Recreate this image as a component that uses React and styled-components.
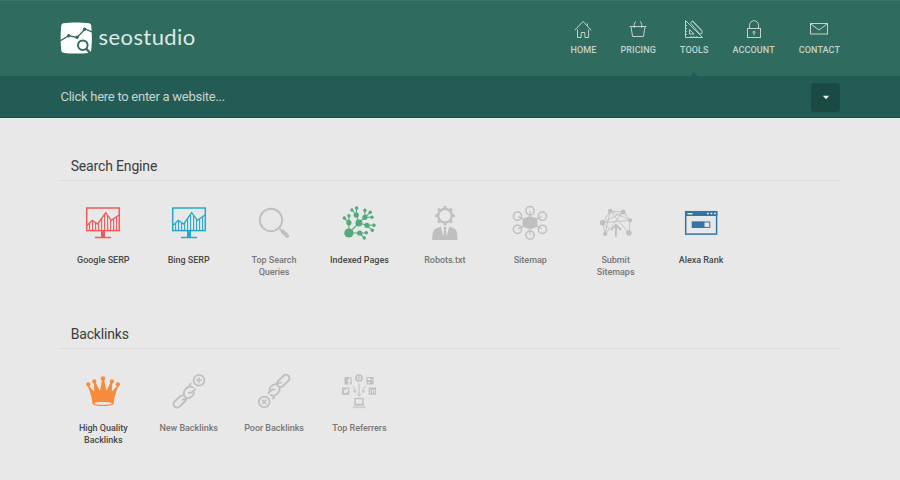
import React from 'react';
import styled, { createGlobalStyle } from 'styled-components';

const Global = createGlobalStyle`
  * { box-sizing: border-box; }
  body { margin: 0; background: #e8e8e8; font-family: Roboto, "Liberation Sans", sans-serif; }
`;

const Page = styled.div`
  height: 480px;
  overflow: hidden;
  background: #e8e8e8;
`;

const Header = styled.header`
  height: 76px;
  padding: 0 60px;
  display: flex;
  justify-content: space-between;
  background: #2f6c5f;
  border-top: 1px solid #38766a;
`;

const Brand = styled.a`
  display: flex;
  align-items: flex-start;
  gap: 5.5px;
  padding-top: 21px;
  color: #fff;
`;

const BrandName = styled.span`
  margin-top: -1px;
  font: 400 22px/32px Lato, sans-serif;
  letter-spacing: 0.42px;
  color: #dfe9e6;
`;

const Nav = styled.nav`
  display: flex;
  gap: 24px;
`;

const NavItem = styled.a`
  position: relative;
  display: flex;
  flex-direction: column;
  align-items: center;
  padding-top: 18px;
  color: #c4d2ce;
  font-size: 9px;
  font-weight: 500;
  line-height: 12px;
  letter-spacing: 0.1px;

  svg { margin-bottom: 3px; }

  &::after {
    content: '';
    display: ${(p) => (p.$active ? 'block' : 'none')};
    position: absolute;
    bottom: 0;
    border: solid transparent;
    border-width: 0 4px 4px;
    border-bottom-color: #235c54;
  }
`;

const SearchBar = styled.div`
  height: 42px;
  padding: 1px 60px 0;
  display: flex;
  align-items: center;
  justify-content: space-between;
  background: #235c54;
  border-bottom: 1px solid #1d4e48;
`;

const Prompt = styled.span`
  padding-left: 0.5px;
  font-size: 13px;
  line-height: 16px;
  letter-spacing: -0.27px;
  color: #c8d5d2;
`;

const Toggle = styled.button`
  width: 29px;
  height: 29px;
  padding: 0;
  border: 0;
  border-radius: 3px;
  background: #1b4a45;
  display: grid;
  place-items: center;
`;

const Section = styled.section`
  height: 168px;
  margin: 0 60px;
`;

const Content = styled.main`
  padding-top: 37px;
`;

const Title = styled.h2`
  height: 26px;
  margin: 0 0 22px;
  padding: 0 10.7px;
  border-bottom: 1px solid #d9d9d9;
  color: #3c3c3c;
  font-size: 14px;
  font-weight: 400;
  line-height: 22px;
  letter-spacing: -0.16px;
`;

const Tools = styled.div`
  display: flex;
  padding-left: 0.6px;
`;

const Tool = styled.a`
  width: 85.4px;
  padding: 0 10px;
  display: flex;
  flex-direction: column;
  align-items: center;
  text-align: center;
  color: ${(p) => (p.$on ? '#484848' : '#777')};
  font-size: 9px;
  font-weight: 500;
  line-height: 12.4px;
  letter-spacing: -0.03px;

  svg { color: ${(p) => p.$tint || '#bfbfbf'}; margin-bottom: 10.7px; flex: none; }
`;

const Icon = ({ children }) => (
  <svg width="40" height="40" viewBox="0 0 40 40" fill="none" stroke="currentColor" strokeWidth="1.5">
    {children}
  </svg>
);

const dots = (list) =>
  list.map(([x, y, r]) => <circle key={`${x}-${y}`} cx={x} cy={y} r={r} fill="currentColor" stroke="none" />);

const Monitor = () => (
  <Icon>
    <rect x="3.7" y="5" width="32.6" height="22.6" strokeWidth="1.5" />
    <path d="M4 22.5 9.3 17.3 14.7 21 22.7 9.7 28.3 17.3 36 12" strokeWidth="1.3" />
    <path d="M6.6 20.5V27M9.6 18V27M12.6 20V27M15.6 20V27M18.6 16V27M21.6 11.5V27M24.6 13V27M27.6 17V27M30.6 16V27M33.6 14V27" strokeWidth="1.1" />
    <path d="M18 28h4v6h-4z" fill="currentColor" stroke="none" />
    <path d="M12.5 34.5h15" strokeLinecap="round" />
  </Icon>
);

const Magnifier = () => (
  <Icon>
    <circle cx="17" cy="17" r="11.2" strokeWidth="1.9" />
    <path d="m25.5 25.7 3 3" strokeWidth="2" />
    <path d="m29 28.7 4.2 4.1" strokeWidth="4" strokeLinecap="round" />
  </Icon>
);

const Network = () => (
  <Icon>
    <path
      strokeWidth="1.1"
      d="M9.9 30 19.9 20 17.3 12 12.9 7M17.3 12l.3-7M19.9 20l6-5.7V7.3M25.9 14.3l5.4-5M25.9 14.3h7M19.9 20l8 2.3h7M27.9 22.3l5.4 5M9.9 30h17.4M20.6 30l4.7 5M9.9 30V12.7M9.9 19.7 5.3 15"
    />
    {dots([
      [9.9, 30, 4.6], [19.9, 20, 3.4], [17.3, 12, 2.6], [25.9, 14.3, 2.6], [27.9, 22.3, 2.6], [20.6, 30, 2.6],
      [9.9, 19.7, 2.6], [12.9, 7, 1.7], [17.6, 5, 1.8], [25.9, 7.3, 1.7], [31.3, 9.3, 1.7], [32.9, 14.3, 1.7],
      [34.9, 22.3, 1.8], [33.3, 27.3, 1.7], [27.3, 29.7, 1.8], [25.3, 35, 1.7], [5.3, 15, 1.7], [9.9, 12.7, 1.7],
    ])}
  </Icon>
);

const Robot = () => (
  <Icon>
    <circle cx="20" cy="12.7" r="6.8" strokeWidth="2.2" />
    {[0, 45, 90, 135, 180, 225, 270, 315].map((a) => (
      <path key={a} d="M20 5.8V2.9" strokeWidth="2.8" transform={`rotate(${a} 20 12.7)`} />
    ))}
    <path
      fill="currentColor"
      stroke="none"
      d="M7.3 37c0-7 .9-10.3 3.7-11.4l4.7-2 2.7 10 .8-7-.8-1.5.9-1.3h1.4l.9 1.3-.8 1.5.8 7 2.7-10 4.7 2c2.8 1.1 3.5 4.4 3.5 11.4z"
    />
  </Icon>
);

const Sitemap = () => (
  <Icon>
    {[[20, 7.7], [7.5, 13.2], [32.4, 13.2], [7.5, 26.3], [32.4, 26.3], [20, 32.1]].map(([x, y]) => (
      <circle key={`${x}-${y}`} cx={x} cy={y} r="4.1" strokeWidth="1.5" />
    ))}
    <path d="M20 8v24M8 13.5 32 26M32 13.5 8 26" strokeWidth="1.1" />
    <path d="m20 13.2 7.4 2.4v8.2L20 26.3l-7.4-2.5v-8.2z" fill="currentColor" stroke="none" />
  </Icon>
);

const Submit = () => (
  <Icon>
    <path
      strokeWidth=".9"
      d="M14.2 8 27.2 9l7 8.3L32.9 30 14.2 8 6.5 19.7l2.7 11 5-22.7 20 9.3M6.5 19.7l27.7-2.4M27.2 9 6.5 19.7 16 28M27.2 9 9.2 30.7"
    />
    <path d="M19.9 34.5V22M14.8 27l5.1-5.1 5.1 5.1" stroke="#e8e8e8" strokeWidth="4" />
    <path d="M19.9 33.7V22M14.8 27l5.1-5.1 5.1 5.1" strokeWidth="1.9" />
    {dots([[14.2, 8, 2.2], [27.2, 9, 2.5], [6.5, 19.7, 2.7], [34.2, 17.3, 2.1], [9.2, 30.7, 2.2], [32.9, 30, 2.8]])}
  </Icon>
);

const Browser = () => (
  <Icon>
    <rect x="4.7" y="8.7" width="30.9" height="22.4" />
    <path d="M4 8h32.3v5H4z" fill="currentColor" stroke="none" />
    <path d="M6.5 10.8h5M26 10.5h1.8M29.5 10.5h1.8M33 10.5h1.8" stroke="#e8e8e8" strokeWidth="1.4" />
    <rect x="11.2" y="19" width="17.6" height="5.4" strokeWidth="1" />
    <path d="M11 18.7h12.5v6H11z" fill="currentColor" stroke="none" />
  </Icon>
);

const Crown = () => (
  <Icon>
    {dots([[5.3, 13.3, 2.1], [11.3, 10.4, 2.1], [20, 7.6, 2.3], [28.9, 10.4, 2.1], [34.9, 13.3, 2.1]])}
    <path
      fill="currentColor"
      stroke="none"
      d="m5 14 6.3 6.8L10.7 11h1.6l4.7 8.8L19.2 8h1.7l2.5 11.8L27.7 11h1.7l-.6 9.8 6.3-6.8.6.7c-2 4-4.4 11-5 18-1.5 3.2-19.4 3.2-21.2 0-.6-7-3-14-5.1-18z"
    />
    <ellipse cx="20.1" cy="32.4" rx="8.7" ry="1.5" fill="#e8e8e8" stroke="none" />
  </Icon>
);

const ChainAdd = () => (
  <Icon>
    <circle cx="30" cy="9.3" r="5.4" strokeWidth="1.7" />
    <path d="M27 9.3h6M30 6.3v6" />
    <rect x="3.5" y="27" width="14.5" height="7" rx="3.5" transform="rotate(-43 10.8 30.5)" strokeWidth="1.9" />
    <path d="M12.8 28.5c2 .7 3.4-.3 4.8-1.6M15 24c-.7-2.5.2-4.5 2-6.3 2.5-2.5 5-2.8 7.3-.9M17.6 27c2 .5 4-.2 6-2.4 1-1.2 1.7-2.3 1.5-3.6M19 21.5c1.7.8 3.5.3 5.2-1.4l2.5-2.5M20 14.5l2.2-2.4" strokeWidth="1.8" />
  </Icon>
);

const ChainRemove = () => (
  <Icon>
    <circle cx="10.2" cy="31" r="5.4" strokeWidth="1.7" />
    <path d="m8 28.8 4.4 4.4M12.4 28.8 8 33.2" />
    <rect x="22" y="6.3" width="14.5" height="7" rx="3.5" transform="rotate(-43 29.3 9.8)" strokeWidth="1.9" />
    <path d="M27.5 11.8c-2-.7-3.4.3-4.8 1.6M25.5 16.3c.7 2.5-.2 4.5-2 6.3-2.5 2.5-5 2.8-7.3.9M22.9 13.3c-2-.5-4 .2-6 2.4-1 1.2-1.7 2.3-1.5 3.6M21.5 18.8c-1.7-.8-3.5-.3-5.2 1.4l-2.5 2.5M20.5 25.8l-2.2 2.4" strokeWidth="1.8" />
  </Icon>
);

const Referrers = () => (
  <Icon>
    <path
      fill="currentColor"
      stroke="none"
      fillRule="evenodd"
      d="M5.5 6h7.2v7.4h-1.8v-2.9h1.2V9.2h-1.2c0-1.2.2-1.5 1.3-1.5V6.6C10 6.5 9.4 7.4 9.4 9.2H8.3v1.3h1.1v2.9H5.5zM27.4 6h7.2v7.4h-7.2zm1.2 1v2.2h2.6V7zm.2 4v1.3h2.5V11zm3.3-2.7v1h1.5v-1zM3 16.4h7.3v7.3H3zm1.2 1.7c.2 1 .5 1.7 1 2.2l-.6.1 1.2 1.1-1.3.5c2.5 1 4.5-.5 4.6-3l.5-.9-1.2-.4c-1-.5-1.7.2-1.7 1.3-1 0-1.8-.4-2.5-1M29.7 16.4H37v7.3h-7.3zm1.2 2.3v3.6h1v-3.6zm0-1.3v.8h1v-.8zm2 1.3v3.6h.9v-2.4c.5-.6 1.2-.4 1.2.3v2.1h1v-2.4c0-1.4-1.5-1.7-2.2-.8v-.4z"
    />
    <circle cx="20" cy="7" r="3.1" strokeWidth="1.5" />
    <path d="m19.2 9 .8-3.2M18.6 6.5c.6-1.6 3-1 2.3.6-.3.6-.7.7-1 .5" strokeWidth=".8" />
    <path d="M20 12.5V25M17.8 22.8l2.2 2.4 2.2-2.4M13.5 15c2 1.5 2.3 3.5 2.3 6M14 19.5l1.8 2 1.5-2M26.5 15c-2 1.5-2.3 3.5-2.3 6M26 19.5l-1.8 2-1.5-2" strokeWidth="1" />
    <rect x="16" y="27.5" width="8" height="6" strokeWidth="1.4" />
    <path d="M14.8 34.8h10.4l.8 1.8H14z" strokeWidth=".8" />
  </Icon>
);

const NavIcon = ({ children }) => (
  <svg width="20" height="22" viewBox="0 0 20 22" fill="none" stroke="currentColor" strokeWidth="1">
    {children}
  </svg>
);

const navItems = [
  ['HOME', <><path d="M4.5 10.5v8h3.7v-5h3.7v5h3.7v-8" /><path d="m1.8 11.2 8.2-8.8 8.2 8.8M14.5 4.5v2" /></>],
  ['PRICING', <><path d="M1.5 7.5h17M3 8l1.6 9.5h10.8L17 8M6.2 9V5.5L7.5 2.5M13.8 9V5.500L12.500 2.500" /></>],
  ['TOOLS', <><path d="M1.5 1.5v17h17zM5.5 10.5v4.5h4.6z" /><path d="m6.5 4 2-2.3L18 11.5v3.2h-2.3zM8.2 2.2l9 9.5M3 6.5H1.5M3 9.5H1.5M3 12.5H1.5M3 15.5H1.5M7 18.5V17M10 18.5V17M13 18.5V17" strokeWidth=".9" /></>],
  ['ACCOUNT', <><rect x="3.5" y="9.5" width="13" height="9" /><path d="M5.5 9.5V6.2a4.5 4.5 0 0 1 9 0v3.3" /><circle cx="10" cy="13.3" r="1" /><path d="M10 14.3v2" /></>],
  ['CONTACT', <><rect x="1.5" y="4.5" width="17" height="10.5" /><path d="m1.8 5 8.2 6 8.2-6" /></>],
];

const sections = [
  ['Search Engine', [
    ['Google SERP', Monitor, '#f05a5b'],
    ['Bing SERP', Monitor, '#25a9ca'],
    ['Top Search Queries', Magnifier],
    ['Indexed Pages', Network, '#51a97c'],
    ['Robots.txt', Robot],
    ['Sitemap', Sitemap],
    ['Submit Sitemaps', Submit],
    ['Alexa Rank', Browser, '#3276a6'],
  ]],
  ['Backlinks', [
    ['High Quality Backlinks', Crown, '#f68b3c'],
    ['New Backlinks', ChainAdd],
    ['Poor Backlinks', ChainRemove],
    ['Top Referrers', Referrers],
  ]],
];

export default function App() {
  return (
    <Page>
      <Global />
      <Header>
        <Brand>
          <svg width="33" height="33" viewBox="0 0 33 33" fill="none" stroke="#2f6c5f">
            <path d="M3.5 1.3C11 .3 21 .3 29 1.3c1.3.2 2 .9 2.2 2.2.9 8 .9 17 0 25-.2 1.3-.9 2-2.2 2.2-8 1.2-18 1.2-25.5 0-1.3-.2-2-.9-2.2-2.2-.9-8-.9-17 0-25 .2-1.3.9-2 2.2-2.2z" fill="#fff" stroke="none" />
            <path d="m0 19 8.7-5.3 8.3 1.8 8-8.5 8 3.3" strokeWidth="1.3" />
            <g fill="#2f6c5f" stroke="none">
              <circle cx="8.7" cy="13.7" r="1.7" />
              <circle cx="17" cy="15.3" r="1.7" />
              <circle cx="24.6" cy="7.3" r="1.7" />
            </g>
            <circle cx="22.8" cy="23.2" r="4.8" strokeWidth="2" fill="#fff" />
            <path d="m26.3 26.8 4 4.4" strokeWidth="2.4" />
          </svg>
          <BrandName>seostudio</BrandName>
        </Brand>
        <Nav>
          {navItems.map(([label, art]) => (
            <NavItem key={label} $active={label === 'TOOLS'}>
              <NavIcon>{art}</NavIcon>
              {label}
            </NavItem>
          ))}
        </Nav>
      </Header>
      <SearchBar>
        <Prompt>Click here to enter a website...</Prompt>
        <Toggle aria-label="Choose website">
          <svg width="8" height="5" viewBox="0 0 8 5"><path d="M.8.8h6.4L4 4.3z" fill="#e6eeec" /></svg>
        </Toggle>
      </SearchBar>
      <Content>
        {sections.map(([title, tools]) => (
          <Section key={title}>
            <Title>{title}</Title>
            <Tools>
              {tools.map(([label, Art, tint]) => (
                <Tool key={label} $on={!!tint} $tint={tint}>
                  <Art />
                  {label}
                </Tool>
              ))}
            </Tools>
          </Section>
        ))}
      </Content>
    </Page>
  );
}
